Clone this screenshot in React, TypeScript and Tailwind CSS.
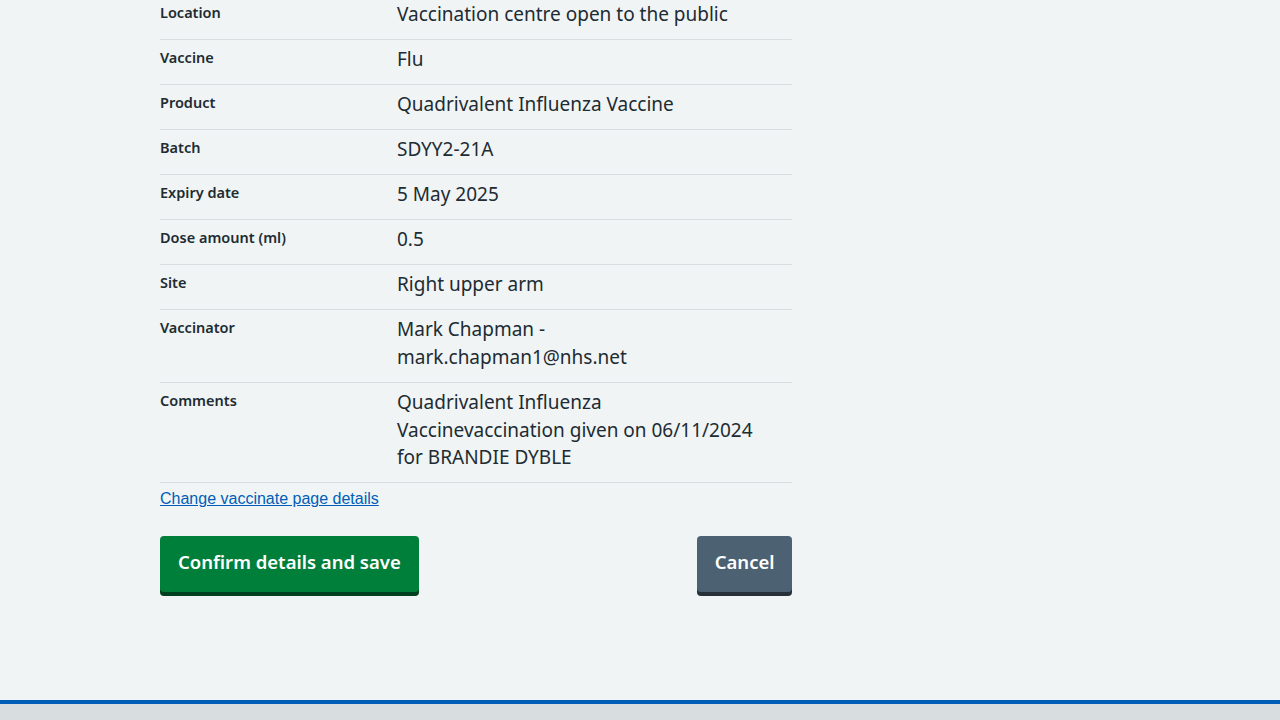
import React from "react";

const rows: { k: string; v: React.ReactNode }[] = [
  { k: "Location", v: "Vaccination centre open to the public" },
  { k: "Vaccine", v: "Flu" },
  { k: "Product", v: "Quadrivalent Influenza Vaccine" },
  { k: "Batch", v: "SDYY2-21A" },
  { k: "Expiry date", v: "5 May 2025" },
  { k: "Dose amount (ml)", v: "0.5" },
  { k: "Site", v: "Right upper arm" },
  { k: "Vaccinator", v: "Mark Chapman - mark.chapman1@nhs.net" },
  {
    k: "Comments",
    v: "Quadrivalent Influenza Vaccinevaccination given on 06/11/2024 for BRANDIE DYBLE",
  },
];

export default function App() {
  return (
    <div
      className="min-h-[720px] bg-[#f0f4f5] text-[#212b32] flex flex-col"
      style={{ fontFamily: "'Noto Sans', sans-serif" }}
    >
      <main className="flex-1 h-[700px] overflow-hidden">
        <div className="w-[632px] ml-[160px] -mt-[5px]">
          <dl>
            {rows.map((r) => (
              <div key={r.k} className="flex border-b border-[#d8dde0] pt-[6px] pb-[10px]">
                <dt className="w-[237px] shrink-0 pr-6 text-[14.5px] font-semibold leading-5 pt-[1px]">
                  {r.k}
                </dt>
                <dd className="w-[370px] text-[19px] leading-[27.95px]">{r.v}</dd>
              </div>
            ))}
          </dl>
          <a
            href="#"
            className="block mt-[6px] text-[16px] leading-[20px] text-[#005eb8] underline"
            style={{ fontFamily: "'Liberation Sans', Arial, sans-serif" }}
          >
            Change vaccinate page details
          </a>
          <div className="flex justify-between mt-[27px]">
            <button className="h-[56px] px-[18px] pb-[5px] rounded-[4px] bg-[#007f3b] text-white text-[18.5px] font-semibold shadow-[0_4px_0_#00401e]">
              Confirm details and save
            </button>
            <button className="h-[56px] px-[17.5px] pb-[5px] rounded-[4px] bg-[#4c6272] text-white text-[18.5px] font-semibold shadow-[0_4px_0_#263139]">
              Cancel
            </button>
          </div>
        </div>
      </main>
      <footer className="h-[20px] border-t-4 border-[#005eb8] bg-[#d8dde0]" />
    </div>
  );
}
